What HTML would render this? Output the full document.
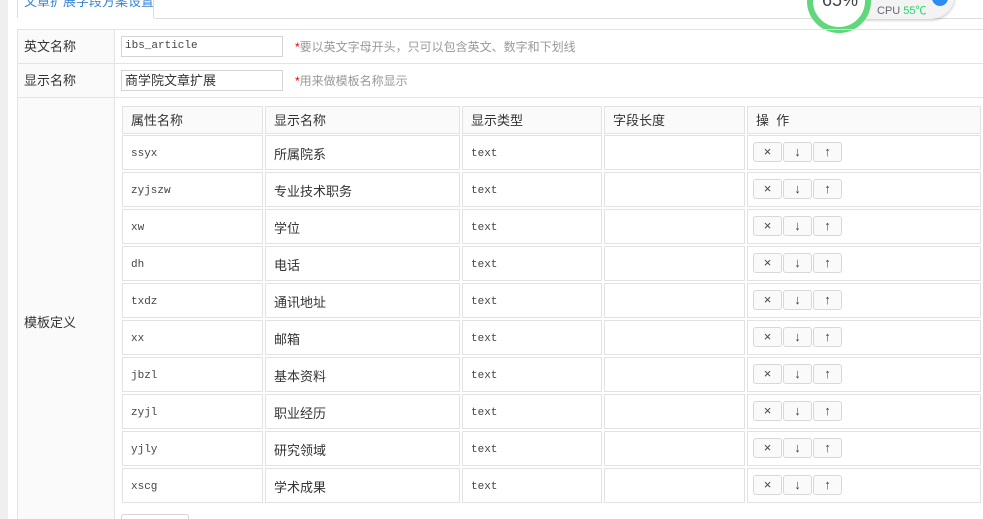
<!DOCTYPE html>
<html style="overflow:hidden;height:519px"><head><meta charset="utf-8"><style>
html,body{margin:0;overflow:hidden;height:519px}
body{width:983px;background:#fff;font-family:"Liberation Sans","Noto Sans CJK SC",sans-serif;font-size:12px;color:#333;position:relative}
.strip{position:absolute;left:0;top:0;width:8px;height:519px;background:#efefef}
.tab{position:absolute;left:17px;top:-10px;width:137px;height:28px;border:1px solid #ddd;border-bottom:none;background:#fff;color:#3a86d6;font-size:13px;line-height:22px;padding-left:6px;box-sizing:border-box;white-space:nowrap;overflow:hidden}
.tabline{position:absolute;left:154px;top:18px;right:0;height:1px;background:#ddd}
.tl{position:absolute;left:17px;width:966px;height:1px;background:#e4e4e4}
.vl{position:absolute;width:1px;background:#e4e4e4}
.lab{position:absolute;left:18px;width:96px;background:#fafafa;padding-left:6px;box-sizing:border-box;font-size:13px}
.inp{position:absolute;left:121px;width:162px;height:21px;border:1px solid #d4d4d4;box-sizing:border-box;padding-left:3px;line-height:19px;font-size:13px}
.hint{position:absolute;left:295px;color:#999;font-size:12px}
.hint b{color:#e00;font-weight:normal}
.c{position:absolute;border:1px solid #e2e2e2;box-sizing:border-box;padding-left:8px;font-size:13px}
.m{font-family:"Liberation Mono",monospace;font-size:11px;color:#444}
.h{background:#fafafa}
.btn{position:absolute;width:29px;height:20px;border:1px solid #d8d8d8;border-radius:3px;background:#fafafa;box-sizing:border-box;text-align:center;line-height:18px;font-size:13px;color:#444}
</style></head><body>
<div class="strip"></div>
<div class="tab">文章扩展字段方案设置</div>
<div class="tabline"></div>
<div style="position:absolute;left:825px;top:-30px;width:130px;height:49px;border-radius:25px;background:#f3f3f3;box-shadow:0 1px 3px rgba(0,0,0,.25)"></div>
<div style="position:absolute;left:877px;top:2px;font-size:11px;color:#667"><span>CPU</span> <span style="color:#2ad46a">55℃</span></div>
<div style="position:absolute;left:932px;top:-10px;width:16px;height:16px;border-radius:50%;background:#2e8bf0"></div>
<div style="position:absolute;left:807px;top:-31px;width:52px;height:52px;border-radius:50%;border:6px solid #5fd77a;background:#fff"></div>
<div style="position:absolute;left:822px;top:-10px;font-size:18px;color:#444">65%</div>

<div class="tl" style="top:29px"></div>
<div class="tl" style="top:63px"></div>
<div class="tl" style="top:97px"></div>
<div class="vl" style="left:17px;top:29px;height:490px"></div>
<div class="vl" style="left:114px;top:29px;height:490px"></div>
<div class="lab" style="top:30px;height:33px;line-height:33px">英文名称</div>
<div class="lab" style="top:64px;height:33px;line-height:33px">显示名称</div>
<div class="lab" style="top:98px;height:421px;line-height:450px">模板定义</div>
<div class="inp m" style="top:36px;font-size:11px">ibs_article</div>
<div class="inp" style="top:70px">商学院文章扩展</div>
<div class="hint" style="top:38px"><b>*</b>要以英文字母开头，只可以包含英文、数字和下划线</div>
<div class="hint" style="top:72px"><b>*</b>用来做模板名称显示</div>
<div id="t"></div>
<div style="position:absolute;left:121px;top:514px;width:66px;height:20px;border:1px solid #d5d5d5;border-radius:3px"></div>
<script>
var cols=[[122,141],[265,195],[462,140],[604,141],[747,234]];
var hdr=["属性名称","显示名称","显示类型","字段长度","操&nbsp;&nbsp;作"];
var rows=[["ssyx","所属院系"],["zyjszw","专业技术职务"],["xw","学位"],["dh","电话"],["txdz","通讯地址"],["xx","邮箱"],["jbzl","基本资料"],["zyjl","职业经历"],["yjly","研究领域"],["xscg","学术成果"]];
var h="";
cols.forEach(function(c,i){h+='<div class="c h" style="left:'+c[0]+'px;top:106px;width:'+c[1]+'px;height:28px;line-height:28px">'+hdr[i]+'</div>';});
rows.forEach(function(r,j){var y=135+j*37;
var v=[r[0],r[1],"text","",""];
cols.forEach(function(c,i){h+='<div class="c'+((i==0||i==2)?' m':'')+'" style="left:'+c[0]+'px;top:'+y+'px;width:'+c[1]+'px;height:35px;line-height:37px">'+v[i]+'</div>';});
h+='<div class="btn" style="left:753px;top:'+(y+7)+'px">×</div><div class="btn" style="left:783px;top:'+(y+7)+'px">↓</div><div class="btn" style="left:813px;top:'+(y+7)+'px">↑</div>';
});
document.getElementById("t").innerHTML=h;
</script>
</body></html>
